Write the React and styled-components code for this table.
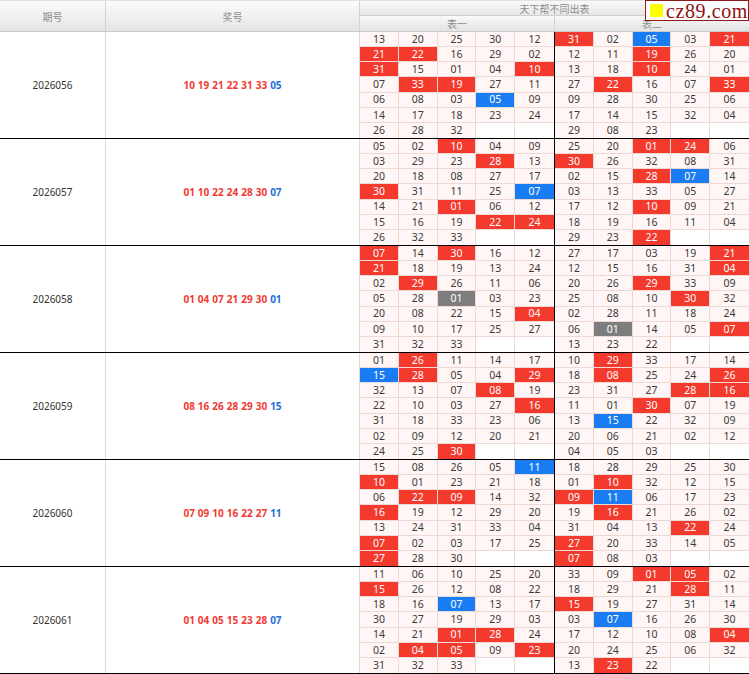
import styled, { createGlobalStyle } from 'styled-components';

const GlobalStyle = createGlobalStyle`
  html, body {
    margin: 0;
    padding: 0;
    background: #fff;
    font-family: "Noto Sans", "Noto Sans CJK SC", sans-serif;
  }
`;

const draws = [
  {
    issue: '2026056',
    reds: ['10', '19', '21', '22', '31', '33'],
    blue: '05',
    t1: '13 20 25 30 12 21 22 16 29 02 31 15 01 04 10 07 33 19 27 11 06 08 03 05 09 14 17 18 23 24 26 28 32',
    t2: '31 02 05 03 21 12 11 19 26 20 13 18 10 24 01 27 22 16 07 33 09 28 30 25 06 17 14 15 32 04 29 08 23',
  },
  {
    issue: '2026057',
    reds: ['01', '10', '22', '24', '28', '30'],
    blue: '07',
    t1: '05 02 10 04 09 03 29 23 28 13 20 18 08 27 17 30 31 11 25 07 14 21 01 06 12 15 16 19 22 24 26 32 33',
    t2: '25 20 01 24 06 30 26 32 08 31 02 15 28 07 14 03 13 33 05 27 17 12 10 09 21 18 19 16 11 04 29 23 22',
  },
  {
    issue: '2026058',
    reds: ['01', '04', '07', '21', '29', '30'],
    blue: '01',
    t1: '07 14 30 16 12 21 18 19 13 24 02 29 26 11 06 05 28 01 03 23 20 08 22 15 04 09 10 17 25 27 31 32 33',
    t2: '27 17 03 19 21 12 15 16 31 04 20 26 29 33 09 25 08 10 30 32 02 28 11 18 24 06 01 14 05 07 13 23 22',
  },
  {
    issue: '2026059',
    reds: ['08', '16', '26', '28', '29', '30'],
    blue: '15',
    t1: '01 26 11 14 17 15 28 05 04 29 32 13 07 08 19 22 10 03 27 16 31 18 33 23 06 02 09 12 20 21 24 25 30',
    t2: '10 29 33 17 14 18 08 25 24 26 23 31 27 28 16 11 01 30 07 19 13 15 22 32 09 20 06 21 02 12 04 05 03',
  },
  {
    issue: '2026060',
    reds: ['07', '09', '10', '16', '22', '27'],
    blue: '11',
    t1: '15 08 26 05 11 10 01 23 21 18 06 22 09 14 32 16 19 12 29 20 13 24 31 33 04 07 02 03 17 25 27 28 30',
    t2: '18 28 29 25 30 01 10 32 12 15 09 11 06 17 23 19 16 21 26 02 31 04 13 22 24 27 20 33 14 05 07 08 03',
  },
  {
    issue: '2026061',
    reds: ['01', '04', '05', '15', '23', '28'],
    blue: '07',
    t1: '11 06 10 25 20 15 26 12 08 22 18 16 07 13 17 30 27 19 29 03 14 21 01 28 24 02 04 05 09 23 31 32 33',
    t2: '33 09 01 05 02 18 29 21 28 11 15 19 27 31 14 03 07 16 26 30 17 12 10 08 04 20 24 25 06 32 13 23 22',
  },
];

const tones = {
  red: '#f4392d',
  blue: '#1a7cf2',
  gray: '#7d7d7d',
};

const Page = styled.div`
  position: relative;
  width: 749px;
  overflow: hidden;
`;

const HeaderRow = styled.div`
  display: flex;
  height: 32px;
  box-sizing: border-box;
  border-top: 1px solid #e2e2e2;
  border-bottom: 1px solid #c9c9c9;
  background: linear-gradient(#fbfbfb, #e5e5e5);
`;

const HeadCell = styled.div`
  width: ${p => p.$w}px;
  box-sizing: border-box;
  border-right: 1px solid #d2d2d2;
  display: flex;
  align-items: center;
  justify-content: center;
  color: #8c8c8c;
  font-size: 10px;
`;

const HeadGroup = styled.div`
  width: 389px;
  display: flex;
  flex-direction: column;
`;

const HeadTitle = styled.div`
  height: 15px;
  box-sizing: border-box;
  border-bottom: 1px solid #cfcfcf;
  background: linear-gradient(#f9f9f9, #e7e7e7);
  display: flex;
  align-items: center;
  justify-content: center;
  color: #8c8c8c;
  font-size: 10px;
`;

const SubHeads = styled.div`
  flex: 1;
  display: flex;
  background: linear-gradient(#f9f9f9, #e3e3e3);
`;

const SubHead = styled.div`
  width: ${p => p.$w}px;
  box-sizing: border-box;
  border-right: ${p => (p.$last ? 'none' : '1px solid #d2d2d2')};
  display: flex;
  align-items: center;
  justify-content: center;
  color: #8c8c8c;
  font-size: 10px;
`;

const Block = styled.div`
  display: flex;
  height: 107px;
  box-sizing: border-box;
  border-bottom: 1px solid #000;
`;

const IssueCell = styled.div`
  width: 106px;
  box-sizing: border-box;
  border-right: 1px solid #d9d9d9;
  display: flex;
  align-items: center;
  justify-content: center;
  font-size: 10px;
  color: #333;
`;

const DrawCell = styled.div`
  width: 254px;
  box-sizing: border-box;
  border-right: 1px solid #d9d9d9;
  display: flex;
  align-items: center;
  justify-content: center;
  gap: 3px;
  font-size: 10px;
  font-weight: 700;
`;

const Ball = styled.span`
  color: ${p => (p.$blue ? '#1f6fd6' : '#f03a33')};
`;

const Boards = styled.div`
  width: 389px;
  display: flex;
`;

const Board = styled.div`
  width: ${p => p.$w}px;
  box-sizing: border-box;
  border-right: ${p => (p.$split ? '1px solid #000' : 'none')};
  display: grid;
  grid-template-columns: repeat(5, 1fr);
  grid-template-rows: repeat(7, 1fr);
`;

const Cell = styled.div`
  box-sizing: border-box;
  border-right: ${p => (p.$col === 4 ? 'none' : '1px solid #ecd9d6')};
  border-bottom: ${p => (p.$row === 6 ? 'none' : '1px solid #ecd9d6')};
  background: ${p => (p.$tone ? tones[p.$tone] : p.$empty ? '#fff' : '#fff6f5')};
  color: ${p => (p.$tone ? '#fff' : '#3a3a3a')};
  display: flex;
  align-items: center;
  justify-content: center;
  font-size: 10.5px;
  line-height: 1;
`;

const Watermark = styled.div`
  position: absolute;
  top: 0;
  right: 0;
  width: 104px;
  height: 21px;
  box-sizing: border-box;
  border: 1px solid #8e1b1b;
  background: #fff;
  display: flex;
  align-items: center;
  gap: 3px;
  padding-left: 4px;
`;

const Square = styled.span`
  width: 13px;
  height: 13px;
  background: #ffff00;
  flex: none;
`;

const Mark = styled.span`
  font-family: "Liberation Serif", "DejaVu Serif", serif;
  font-size: 20px;
  letter-spacing: 0.6px;
  color: #8e1010;
  line-height: 1;
`;

function toneFor(n, reds, blue) {
  const red = reds.includes(n);
  const isBlue = n === blue;
  if (red && isBlue) return 'gray';
  if (red) return 'red';
  if (isBlue) return 'blue';
  return null;
}

function NumberBoard({ list, reds, blue, width, split }) {
  const nums = list.split(' ');
  const cells = Array.from({ length: 35 }, (_, i) => nums[i] || '');
  return (
    <Board $w={width} $split={split}>
      {cells.map((n, i) => (
        <Cell
          key={i}
          $row={Math.floor(i / 5)}
          $col={i % 5}
          $empty={!n}
          $tone={n ? toneFor(n, reds, blue) : null}
        >
          {n}
        </Cell>
      ))}
    </Board>
  );
}

export default function App() {
  return (
    <Page>
      <GlobalStyle />
      <HeaderRow>
        <HeadCell $w={106}>期号</HeadCell>
        <HeadCell $w={254}>奖号</HeadCell>
        <HeadGroup>
          <HeadTitle>天下帮不同出表</HeadTitle>
          <SubHeads>
            <SubHead $w={195}>表一</SubHead>
            <SubHead $w={194} $last>表二</SubHead>
          </SubHeads>
        </HeadGroup>
      </HeaderRow>
      {draws.map(d => (
        <Block key={d.issue}>
          <IssueCell>{d.issue}</IssueCell>
          <DrawCell>
            {d.reds.map(r => (
              <Ball key={r}>{r}</Ball>
            ))}
            <Ball $blue>{d.blue}</Ball>
          </DrawCell>
          <Boards>
            <NumberBoard list={d.t1} reds={d.reds} blue={d.blue} width={195} split />
            <NumberBoard list={d.t2} reds={d.reds} blue={d.blue} width={194} />
          </Boards>
        </Block>
      ))}
      <Watermark>
        <Square />
        <Mark>cz89.com</Mark>
      </Watermark>
    </Page>
  );
}
